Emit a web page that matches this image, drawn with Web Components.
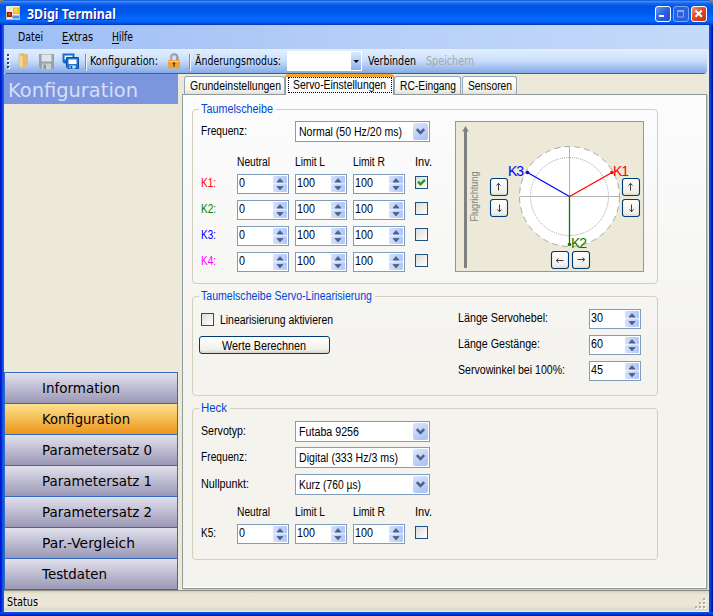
<!DOCTYPE html>
<html lang="de">
<head>
<meta charset="utf-8">
<title>3Digi Terminal</title>
<style>
html,body{margin:0;padding:0;width:713px;height:616px;overflow:hidden;background:#808080}
</style>
</head>
<body>
<app-window></app-window>
<script>
function define(name, css, html, setup) {
  customElements.define(name, class extends HTMLElement {
    connectedCallback() {
      if (this.shadowRoot) return;
      const root = this.attachShadow({ mode: 'open' });
      const body = typeof html === 'function' ? html(this) : html;
      root.innerHTML = `<style>*{box-sizing:border-box}:host{box-sizing:border-box;display:block}${css}</style>${body}`;
      if (setup) setup(this, root);
    }
  });
}

// Text run condensed or stretched to the width given in "w".
define('ui-text', `
  :host{white-space:pre;font:12px/14px "Liberation Sans",sans-serif;height:14px;flex:none}
  :host([ui]){font-family:"DejaVu Sans Condensed","DejaVu Sans",sans-serif;font-size:11.5px}
  span{display:inline-block;transform-origin:0 0;vertical-align:top}
  u{text-decoration:none;box-shadow:0 1px currentColor;display:inline-block;height:13px;vertical-align:top}`,
  el => `<span>${el.hasAttribute('key') ? `<u>${el.textContent[0]}</u>${el.textContent.slice(1)}` : el.textContent}</span>`,
  (el, root) => {
    const w = +el.getAttribute('w');
    const s = root.querySelector('span');
    el.style.width = w + 'px';
    const n = s.getBoundingClientRect().width;
    if (n && w) s.style.transform = `scaleX(${w / n})`;
  });

define('ui-spin', `
  :host{width:52px;height:20px;border:1px solid #7f9db9;background:#fff;display:flex;justify-content:space-between;padding:1px}
  svg{display:block;flex:none}`,
  el => { const v = el.getAttribute('value');
    return `<ui-text w="${v.length * 6}">${v}</ui-text>
    <svg width="14" height="16" viewBox="0 0 14 16"><defs><linearGradient id="g"><stop offset="0" stop-color="#d3e0fe"/><stop offset="1" stop-color="#b0c6f8"/></linearGradient></defs>
    <rect width="14" height="7.6" rx="1" fill="url(#g)"/><rect y="8.2" width="14" height="7.8" rx="1" fill="url(#g)"/>
    <path d="M4 6 7 2.6 10 6ZM4 10.5 7 13.9 10 10.5Z" fill="#4d6185" stroke="#4d6185" stroke-width=".8"/></svg>`; });

define('ui-combo', `
  :host{width:135px;height:21px;border:1px solid #7f9db9;background:#fff;display:flex;justify-content:space-between;padding:1px 1px 1px 3px}
  ui-text{margin-top:2px}svg{display:block}`,
  el => `<ui-text w="${el.getAttribute('w')}">${el.textContent}</ui-text>
    <svg width="15" height="17" viewBox="0 0 15 17"><defs><linearGradient id="g" x2=".5" y2="1"><stop offset="0" stop-color="#dbe6ff"/><stop offset="1" stop-color="#afc5f7"/></linearGradient></defs>
    <rect width="15" height="17" rx="2" fill="url(#g)"/><path d="M3.8 6.2 7.5 9.9 11.2 6.2" fill="none" stroke="#4d6185" stroke-width="2.5"/></svg>`);

define('ui-check', `
  :host{width:13px;height:13px;border:1px solid #1c5180;background:linear-gradient(135deg,#dcdcd7,#fff)}
  svg{display:none}:host([checked]) svg{display:block}`,
  `<svg width="11" height="11" viewBox="0 0 11 11"><path d="M2 4.6 4.5 7.2 9 2.8" fill="none" stroke="#21a121" stroke-width="2.4"/></svg>`);

define('ui-group', `
  fieldset{margin:0;min-width:0;height:100%;border:1px solid #d0d0bf;border-radius:4px;padding:0 0 0 8px}
  legend{padding:0 3px 0 2px;margin-left:-2px;color:#0046d5;height:14px}`,
  el => `<fieldset><legend><ui-text w="${el.getAttribute('w')}">${el.getAttribute('heading')}</ui-text></legend><slot></slot></fieldset>`);

define('ui-servos', `
  :host{display:grid;grid-template-columns:36px 58px 58px 62px 18px;grid-template-rows:19px;grid-auto-rows:26px;justify-items:start;align-items:start}
  .k{margin-top:2px}ui-check{margin-top:2px}`,
  el => {
    let h = `<i></i><ui-text w="33">Neutral</ui-text><ui-text w="30">Limit L</ui-text><ui-text w="32">Limit R</ui-text><ui-text w="17">Inv.</ui-text>`;
    for (const r of el.getAttribute('rows').split(' ')) {
      const [k, c, on] = r.split(',');
      h += `<ui-text class="k" w="15" style="color:${c}">${k}:</ui-text><ui-spin value="0"></ui-spin><ui-spin value="100"></ui-spin><ui-spin value="100"></ui-spin><ui-check ${on ? 'checked' : ''}></ui-check>`;
    }
    return h;
  });

function arrowButton(x, y, deg) {
  return `<g transform="translate(${x} ${y})"><rect width="18" height="18" fill="#fbfaf4"/>
    <rect x=".5" y=".5" width="17" height="17" rx="2.5" fill="url(#b)" stroke="#003c74" stroke-width="1.1"/>
    <g transform="rotate(${deg} 9 9)"><path d="M8.5 5.5V12.5M6.5 7.5 8.5 5.3 10.5 7.5" stroke="#33202a" stroke-width=".9" fill="none"/></g></g>`;
}
define('swash-view', `:host{width:189px;height:151px}svg{display:block;font-family:"Liberation Sans",sans-serif}`,
  `<svg width="189" height="151" viewBox="455 121 189 151"><defs><linearGradient id="b" x2="0" y2="1"><stop offset="0" stop-color="#fff"/><stop offset=".8" stop-color="#f0efe9"/><stop offset="1" stop-color="#dcd7ca"/></linearGradient></defs>
  <rect x="455.5" y="121.5" width="188" height="150" fill="#ece9d8" stroke="#7f9db9"/>
  <path d="M465.5 268V130" stroke="#808080" stroke-width="3"/><path d="M462.3 131.5 465.5 126 468.7 131.5Z" fill="#808080"/>
  <text transform="translate(477.5 221.5) rotate(-90)" font-size="10.5" fill="#808080" textLength="50" lengthAdjust="spacingAndGlyphs">Flugrichtung</text>
  <circle cx="569.5" cy="196.5" r="50" fill="#fff" stroke="#a9a9a9" stroke-dasharray="6 4"/>
  <circle cx="569.5" cy="196.5" r="39" fill="none" stroke="#a0a0a0" stroke-dasharray="1 1"/>
  <path d="M519.5 196.5H620M569.5 146.5V246" stroke="#b4b4b4"/>
  <path d="M569.5 196.5 527.5 172.5" stroke="#00f" stroke-width="1.25"/><path d="M569.5 196.5 612 172.5" stroke="#f00" stroke-width="1.25"/><path d="M569.5 196V244" stroke="#008000" stroke-width="1.3"/>
  <circle cx="527.5" cy="172.5" r="1.8" fill="#00f"/><circle cx="612" cy="172.5" r="1.8" fill="#f00"/><circle cx="569.5" cy="244.5" r="1.8" fill="#008000"/>
  <g font-size="14"><text x="508" y="176" fill="#00f" textLength="16">K3</text><text x="613" y="176" fill="#f00" textLength="16">K1</text><text x="571" y="248" fill="#008000" textLength="16">K2</text></g>
  ${arrowButton(490,178,0)}${arrowButton(490,199,180)}${arrowButton(622,178,0)}${arrowButton(622,199,180)}${arrowButton(551,251,-90)}${arrowButton(572,251,90)}</svg>`);

define('ui-button', `
  :host{width:131px;height:18px;border:1px solid #003c74;border-radius:3px;background:linear-gradient(#fff,#f0efe8 80%,#d8d2c4);display:flex;padding:2px 0 0 22px}`,
  `<slot></slot>`);

define('title-bar', `
  :host{height:25px;display:flex;align-items:flex-start;padding:6px 6px 0 6px;border-radius:6px 6px 0 0;
   background:linear-gradient(#0a50d8 0,#3c8cf8 1.5px,#1468f0 3.5px,#0054e3 6px,#0058ee 13px,#0566ff 18px,#0566ff 21px,#0348d0 24px,#0036b0)}
  svg{display:block}.t{margin:1px auto 0 7px;color:#fff;font:bold 13.5px/14px "Noto Sans","Open Sans",sans-serif;text-shadow:1px 1px #0a1883}
  .b{display:flex;gap:2px}`,
  `<svg width="14" height="14" viewBox="0 0 14 14"><rect width="14" height="14" rx="1" fill="#f4efe2"/><path d="M.5 5V13.5H13.5V1" fill="none" stroke="#c8b89a"/><rect x="1" y="6" width="5" height="5" fill="#a01c10"/><rect x="2.5" y="7.2" width="2" height="2.2" fill="#f05a38"/><rect x="7" y="1.5" width="6" height="6.5" fill="#f6b820"/><rect x="8.2" y="2.7" width="3.3" height="3.5" fill="#ffda58"/><rect x="6.5" y="9.5" width="6.5" height="3" fill="#5a8ae0"/><rect x="2" y="1.5" width="3.5" height="2.5" fill="#dce6f8"/></svg>
  <ui-text class="t" w="89">3Digi Terminal</ui-text>
  <div class="b"><svg width="16" height="16" viewBox="0 0 16 16"><defs><linearGradient id="b" x2="1" y2="1"><stop offset="0" stop-color="#6d9bf5"/><stop offset=".5" stop-color="#2b61e0"/><stop offset="1" stop-color="#1c4fd0"/></linearGradient></defs><rect x=".5" y=".5" width="15" height="15" rx="2.5" fill="url(#b)" stroke="#fff"/><rect x="4" y="9" width="5" height="2" fill="#fff"/></svg>
  <svg width="16" height="16" viewBox="0 0 16 16"><rect x=".5" y=".5" width="15" height="15" rx="2.5" fill="#2a62de" stroke="#7ea5f2"/><path d="M4.5 5V11H10.5V5" fill="none" stroke="#86a8f0"/><path d="M4 5H11" stroke="#86a8f0" stroke-width="2"/></svg>
  <svg width="16" height="16" viewBox="0 0 16 16"><defs><linearGradient id="r" x2="1" y2="1"><stop offset="0" stop-color="#ef9a80"/><stop offset=".45" stop-color="#e0482a"/><stop offset="1" stop-color="#c43410"/></linearGradient></defs><rect x=".5" y=".5" width="15" height="15" rx="2.5" fill="url(#r)" stroke="#fff"/><path d="M4.5 4.5 10.8 10.8M10.8 4.5 4.5 10.8" stroke="#fff" stroke-width="2"/></svg></div>`);

define('menu-bar', `
  :host{height:24px;display:flex;padding:5px 0 0 14px;background:linear-gradient(90deg,#9ebef5,#b8cff8 55%,#c4dafa)}
  ui-text+ui-text{margin-left:19px}`,
  `<ui-text ui w="25">Datei</ui-text><ui-text ui key w="31">Extras</ui-text><ui-text ui key w="21">Hilfe</ui-text>`);

define('tool-bar', `
  :host{height:25px;display:flex;align-items:flex-start;padding:5px 0 0 3px;background:linear-gradient(#e3efff,#cbdffc 45%,#84aae6 96%,#3b619c 96%);border-radius:3px 0 4px 3px;margin-right:2px}
  svg{display:block;flex:none;margin-top:-1px}.s{width:1px;height:16px;background:#6a8ccb;box-shadow:1px 1px #f1f9ff;flex:none}
  .c{width:75px;height:20px;margin-top:-3px;background:#fff;border:1px solid #fff;display:flex;justify-content:flex-end;flex:none}
  .c svg{margin:0}`,
  `<svg width="10" height="18" viewBox="0 0 10 18"><g fill="#fff"><rect x="1" y="2" width="2" height="2"/><rect x="1" y="6" width="2" height="2"/><rect x="1" y="10" width="2" height="2"/><rect x="1" y="14" width="2" height="2"/></g><g fill="#27417a"><rect y="1" width="2" height="2"/><rect y="5" width="2" height="2"/><rect y="9" width="2" height="2"/><rect y="13" width="2" height="2"/></g></svg>
  <svg style="margin-left:1px" width="12" height="18" viewBox="0 0 12 18"><path d="M1 1 4 0 8 1 10 1.5V13L5 14 1 13Z" fill="#e5bc6e"/><path d="M1 1 5 3.5V15.5L1 13Z" fill="#f6d694" stroke="#e0b465" stroke-width=".6"/></svg>
  <svg style="margin-left:9px" width="16" height="18" viewBox="0 0 16 18"><path d="M0 1H15V16H2L0 14Z" fill="#9aa0a8"/><rect x="2.5" y="1.5" width="10" height="7" fill="#dfe5ee"/><rect x="3" y="10.5" width="9" height="5.5" fill="#c9d0da"/><rect x="4.5" y="11.5" width="2.5" height="4.5" fill="#8d939b"/></svg>
  <svg style="margin-left:7px" width="18" height="18" viewBox="0 0 18 18"><path d="M.5.5H12.5V10.5H2L.5 9Z" fill="#1470cc"/><rect x="2.5" y="2.5" width="8" height="4" fill="#eaf5ff"/><path d="M4.5 4.5H16.5V15.5H6L4.5 14Z" fill="#1878d4" stroke="#0c4ea4"/><rect x="6.5" y="6.5" width="8" height="4.5" fill="#fff"/><rect x="7.5" y="12.5" width="6" height="3" fill="#cde6ff"/><rect x="8.5" y="13" width="1.8" height="2.5" fill="#0c4ea4"/></svg>
  <i class="s" style="margin-left:5px"></i><ui-text ui w="68" style="margin-left:4px">Konfiguration:</ui-text>
  <svg style="margin-left:9px" width="14" height="17" viewBox="0 0 14 17"><path d="M4 8V4.5A3.2 3.2 0 0 1 10.4 4.5V8" fill="none" stroke="#8b8f96" stroke-width="2.2"/><path d="M3.8 8V4.5A3.2 3.2 0 0 1 9.8 3.6" fill="none" stroke="#d8dce2" stroke-width=".7"/><rect x="1" y="7" width="12" height="8.5" rx="1" fill="#eda23a"/><path d="M1.5 8.5H12.5" stroke="#ffd178"/><circle cx="7" cy="10.4" r="1.2" fill="#5c3c10"/><path d="M7 10.5V14" stroke="#5c3c10" stroke-width="1.2"/></svg>
  <i class="s" style="margin-left:8px"></i><ui-text ui w="86" style="margin-left:5px">Änderungsmodus:</ui-text>
  <div class="c" style="margin-left:6px"><svg width="10" height="18" viewBox="0 0 10 18"><defs><linearGradient id="g" x2="0" y2="1"><stop offset="0" stop-color="#dceaff"/><stop offset="1" stop-color="#8db0e8"/></linearGradient></defs><rect width="10" height="18" fill="url(#g)"/><path d="M2.5 8H8L5.2 11Z"/></svg></div>
  <ui-text ui w="48" style="margin-left:6px">Verbinden</ui-text><ui-text ui w="48" style="margin-left:10px;color:#a6a8ac">Speichern</ui-text>`);

define('side-bar', `
  :host{width:174px;display:flex;flex-direction:column;justify-content:space-between;background:#ece9d8}
  header{height:30px;background:#7b96df;color:#d6dff7;padding:5px 0 0 4px}
  header ui-text{font:19.5px/24px "DejaVu Sans",sans-serif;height:24px}
  nav{border:1px solid #316ac5;border-top:0}
  a{display:block;height:31px;border-top:1px solid #316ac5;background:linear-gradient(#e2e1ed,#9a97b6);padding:8px 0 0 37px}
  a.on{background:linear-gradient(#fbe28e,#ee951a)}
  a ui-text{font:13.3px/16px "DejaVu Sans",sans-serif;height:16px}`,
  `<header><ui-text w="130">Konfiguration</ui-text></header>
   <nav><a><ui-text w="78">Information</ui-text></a><a class="on"><ui-text w="88">Konfiguration</ui-text></a><a><ui-text w="110">Parametersatz 0</ui-text></a><a><ui-text w="110">Parametersatz 1</ui-text></a><a><ui-text w="110">Parametersatz 2</ui-text></a><a><ui-text w="93">Par.-Vergleich</ui-text></a><a><ui-text w="65">Testdaten</ui-text></a></nav>`);

define('tab-strip', `
  :host{height:21px;display:flex;align-items:flex-end;padding-left:2px;margin-bottom:-1px;position:relative}
  div{height:18px;border:1px solid #91a7b4;border-bottom:0;border-radius:3px 3px 0 0;background:linear-gradient(#fff,#f3f3ef 75%,#e2e0d6);padding:2px 0 0 4.5px;margin-bottom:1px}
  .a{height:21px;border-color:#919b9c;border-top:3px solid #f4a62a;background:#fcfcfe;padding:0 0 0 2px;margin-bottom:0}
  .f{display:block;width:104px;height:16px;border:1px dotted #000;padding:0 0 0 4px}`,
  `<div style="width:101px"><ui-text w="91">Grundeinstellungen</ui-text></div>
   <div class="a" style="width:109px"><span class="f"><ui-text w="93">Servo-Einstellungen</ui-text></span></div>
   <div style="width:67px"><ui-text w="56">RC-Eingang</ui-text></div>
   <div style="width:55px;margin-left:1px"><ui-text w="44">Sensoren</ui-text></div>`);

define('servo-page', `
  :host{flex:1;padding:7px 0 0 9px;border:1px solid #919b9c;background:linear-gradient(#fcfcfe,#f4f3ee 55%,#f4f3ee);box-shadow:1px 1px #d0ccbd,inset -1px -1px #fff;display:flex;flex-direction:column}
  ui-group{width:466px;flex:none}
  .g1{height:182px}.g2{height:107px;margin-top:5px}.g3{height:159px;margin-top:5px}
  .f{display:flex}.row{display:flex;width:254px}
  .row>ui-text{margin-top:3px}.row>ui-combo{margin-left:auto;margin-right:25px}
  .len{display:flex;justify-content:space-between;width:183px;height:26px}.len ui-text{margin-top:2px}`,
  `<ui-group class="g1" heading="Taumelscheibe" w="72"><div class="f" style="padding-top:5px">
     <div style="width:254px"><div class="row" style="height:34px"><ui-text w="46">Frequenz:</ui-text><ui-combo w="103">Normal (50 Hz/20 ms)</ui-combo></div>
     <ui-servos rows="K1,#f00,1 K2,#008000 K3,#00f K4,#f0f"></ui-servos></div><swash-view></swash-view></div></ui-group>
   <ui-group class="g2" heading="Taumelscheibe Servo-Linearisierung" w="171"><div class="f" style="padding-top:6px">
     <div style="width:257px;padding-top:4px"><div class="f" style="gap:6px;height:23px"><ui-check></ui-check><ui-text w="113">Linearisierung aktivieren</ui-text></div><ui-button style="margin-left:-2px"><ui-text w="84">Werte Berechnen</ui-text></ui-button></div>
     <div><div class="len"><ui-text w="90">Länge Servohebel:</ui-text><ui-spin value="30"></ui-spin></div><div class="len"><ui-text w="82">Länge Gestänge:</ui-text><ui-spin value="60"></ui-spin></div><div class="len"><ui-text w="107">Servowinkel bei 100%:</ui-text><ui-spin value="45"></ui-spin></div></div></div></ui-group>
   <ui-group class="g3" heading="Heck" w="26"><div style="padding-top:6px">
     <div class="row" style="height:26px"><ui-text w="45">Servotyp:</ui-text><ui-combo w="60">Futaba 9256</ui-combo></div>
     <div class="row" style="height:27px"><ui-text w="46">Frequenz:</ui-text><ui-combo w="99">Digital (333 Hz/3 ms)</ui-combo></div>
     <div class="row" style="height:31px"><ui-text w="48">Nullpunkt:</ui-text><ui-combo w="62">Kurz (760 µs)</ui-combo></div>
     <ui-servos rows="K5,#000"></ui-servos></div></ui-group>`);

define('status-bar', `
  :host{height:22px;display:flex;justify-content:space-between;padding:5px 0 0 3px;background:linear-gradient(#8f8d80 0,#8f8d80 1px,#d4d0c0 1px,#e8e5d5 4px,#ebe8d9 15px,#dcd8c8 20px,#f4f1e4 22px)}
  svg{display:block;margin:3px 1px 0 0}`,
  `<ui-text ui w="31">Status</ui-text><svg width="13" height="13" viewBox="0 0 13 13"><g fill="#fff"><path d="M9 1h2v2h-2zM5 5h2v2h-2zM9 5h2v2h-2zM1 9h2v2h-2zM5 9h2v2h-2zM9 9h2v2h-2z"/></g><path fill="#b0ac9c" d="M8 0h2v2h-2zM4 4h2v2h-2zM8 4h2v2h-2zM0 8h2v2h-2zM4 8h2v2h-2zM8 8h2v2h-2z"/></svg>`);

define('app-window', `
  :host{width:713px;height:616px;display:flex;flex-direction:column;border-radius:6px 6px 0 0;overflow:hidden;color:#000;background:#0540e0}
  .client{flex:1;margin-bottom:4px;padding:0 4px;background:linear-gradient(90deg,#0019cf 0,#0019cf 1px,#0831e0 2px,#166aee 3px,#0855dd 4px,transparent 4px,transparent 709px,#0a50ea 709px,#0440d8 711px,#0010a0 712px)}
  .in{height:587px;background:#ece9d8;display:flex;flex-direction:column}
  .mid{display:flex;flex:1}.tabs{margin-left:4px;width:525px;height:515px;display:flex;flex-direction:column}
  .foot{height:4px;background:linear-gradient(#0a50ea,#0440d8 50%,#0010a0);margin-top:-4px}
  menu-bar,tool-bar,status-bar{flex:none}`,
  `<title-bar></title-bar><div class="client"><div class="in"><menu-bar></menu-bar><tool-bar></tool-bar>
   <div class="mid"><side-bar></side-bar><div class="tabs"><tab-strip></tab-strip><servo-page></servo-page></div></div>
   <status-bar></status-bar></div></div><div class="foot"></div>`);
</script>
</body>
</html>
